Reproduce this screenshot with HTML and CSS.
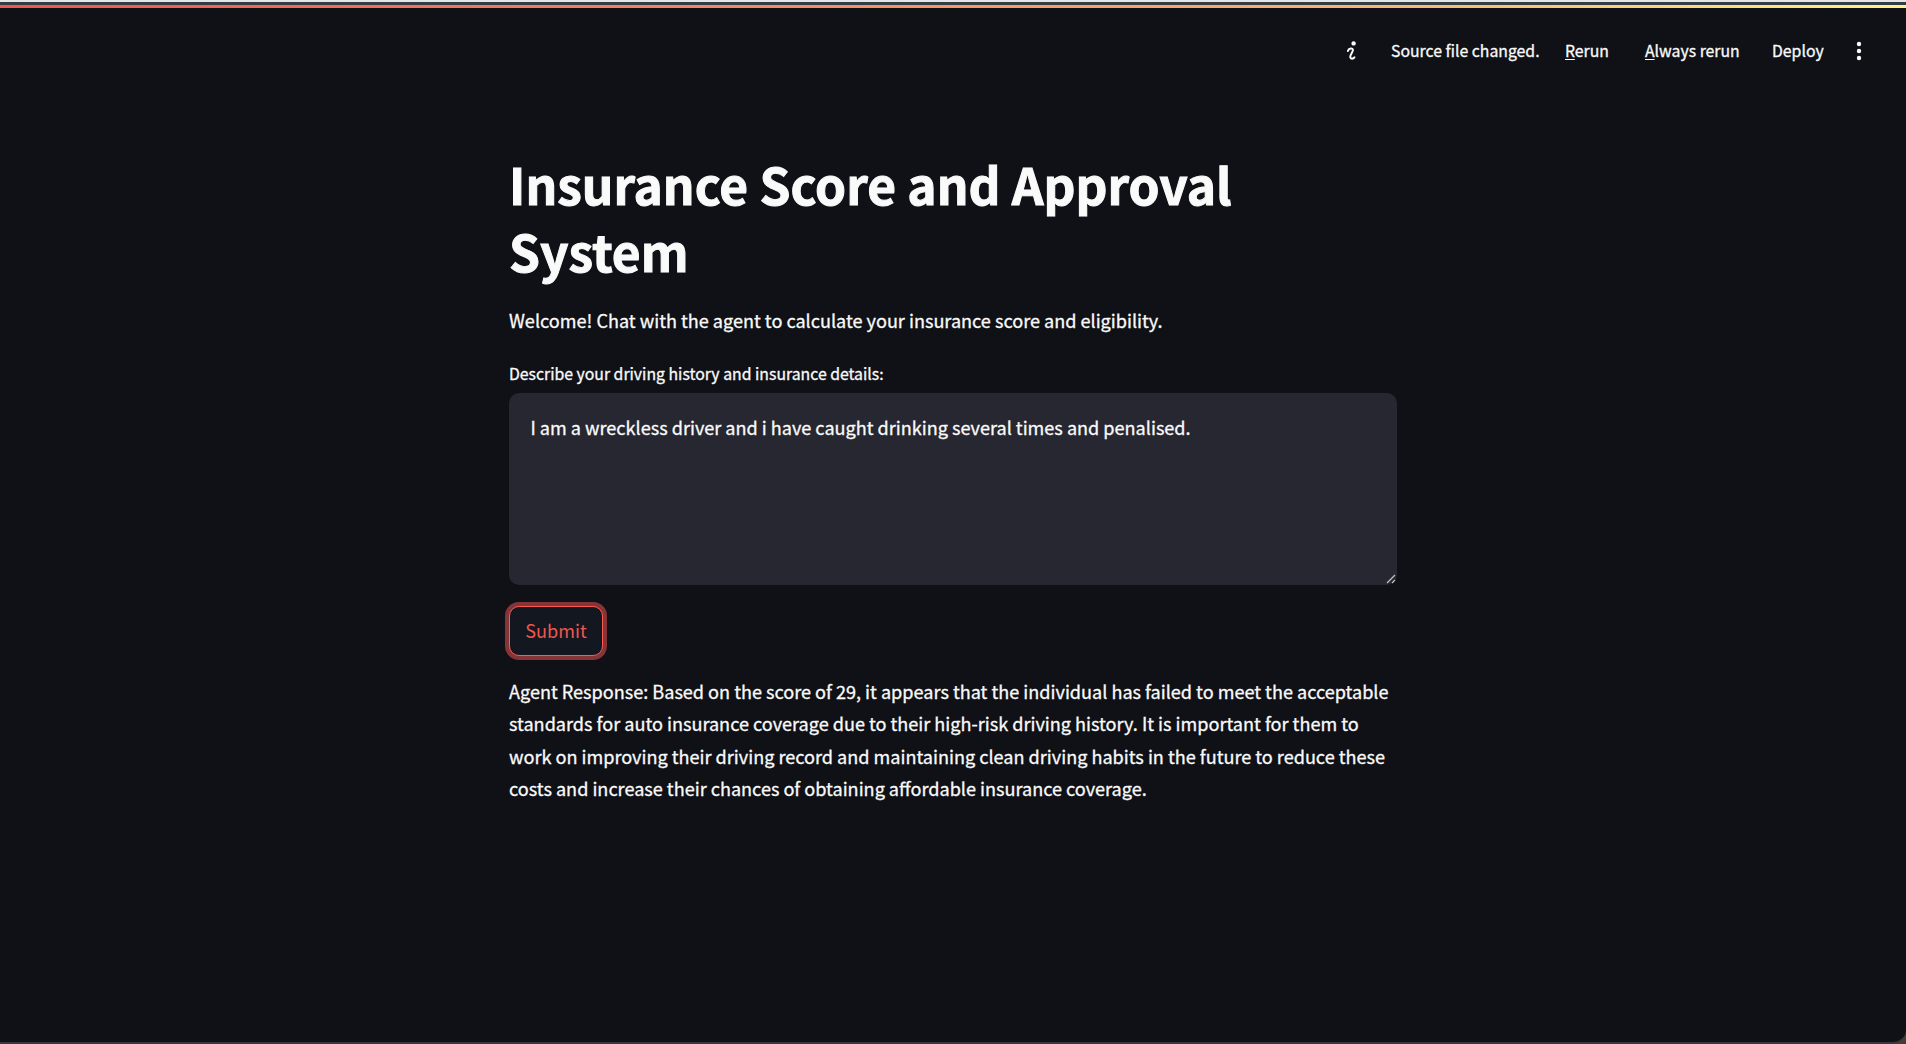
FILE: index.html
```
<!DOCTYPE html>
<html lang="en">
<head>
<meta charset="utf-8">
<title>Insurance Score and Approval System</title>
<link rel="stylesheet" href="styles.css">
</head>
<body>
<div class="app">
  <div class="decoration"></div>
  <header class="toolbar">
    <svg class="info-icon" viewBox="0 0 12 22" aria-hidden="true">
      <circle cx="7.6" cy="3.4" r="2.2" fill="#fafafa"/>
      <path d="M1.9 11 C2.6 8.4 7.2 7.4 6.9 10.2 C6.6 12.6 4 14.8 4.2 17 C4.5 19.4 7.4 18.9 8.4 17.4" fill="none" stroke="#fafafa" stroke-width="2" stroke-linecap="round"/>
    </svg>
    <span class="status">Source file changed.</span>
    <span class="action rerun"><u>R</u>erun</span>
    <span class="action always"><u>A</u>lways rerun</span>
    <span class="action deploy">Deploy</span>
    <svg class="menu-icon" viewBox="0 0 6 20" aria-hidden="true">
      <circle cx="3" cy="3" r="2.2"/><circle cx="3" cy="10" r="2.2"/><circle cx="3" cy="17" r="2.2"/>
    </svg>
  </header>
  <main class="content">
    <h1 class="title">Insurance Score and Approval System</h1>
    <p class="intro">Welcome! Chat with the agent to calculate your insurance score and eligibility.</p>
    <div class="label">Describe your driving history and insurance details:</div>
    <div class="textarea">I am a wreckless driver and i have caught drinking several times and penalised.
      <svg class="grip" viewBox="0 0 10 10" aria-hidden="true"><path d="M1 9 L9 1 M6 9 L9 6" stroke="#c4c4c6" stroke-width="1.2"/></svg>
    </div>
    <button class="submit">Submit</button>
    <p class="response">Agent Response: Based on the score of 29, it appears that the individual has failed to meet the acceptable standards for auto insurance coverage due to their high-risk driving history. It is important for them to work on improving their driving record and maintaining clean driving habits in the future to reduce these costs and increase their chances of obtaining affordable insurance coverage.</p>
  </main>
</div>
</body>
</html>
```
FILE: styles.css
```
* { box-sizing: border-box; }
html { background: #4a3a30; }
body {
  margin: 0;
  height: 1044px;
  overflow: hidden;
  font-family: "Noto Sans CJK SC", "Noto Sans", sans-serif;
  font-size: 18.08px;
  line-height: 32.4px;
  color: #fafafa;
  -webkit-text-stroke: 0.3px currentColor;
}
.app {
  height: 1044px;
  background: #0f1116;
  border-top: 2px solid #e4e5e7;
  border-bottom: 2px solid #3a363b;
  border-radius: 0 0 14px 0;
}
.decoration {
  height: 6px;
  border-top: 3px solid #343c44;
  background: linear-gradient(90deg, #f0564f, #f8b978 75%, #fdf488);
}
.toolbar {
  display: flex;
  align-items: center;
  height: 86px;
  padding-left: 1346px;
  font-size: 15.8px;
  line-height: 24px;
  white-space: nowrap;
}
.info-icon { width: 12px; height: 22px; margin-right: 33px; }
.status { width: 174px; }
.rerun { width: 80px; }
.always { width: 127px; }
.deploy { width: 84px; }
.menu-icon { width: 6px; height: 20px; fill: #fafafa; }
.action u { text-decoration-thickness: 1px; text-underline-offset: 2px; }
.content {
  display: flex;
  flex-direction: column;
  align-items: flex-start;
  width: 888px;
  margin: 56px 0 0 509px;
}
.title {
  margin: 0 0 21px;
  font-size: 49.65px;
  line-height: 66.6px;
  font-weight: 700;
  -webkit-text-stroke-width: 1px;
}
.intro { margin: 0 0 25px; }
.label { font-size: 15.8px; line-height: 24px; margin-bottom: 7px; }
.textarea {
  position: relative;
  width: 888px;
  height: 192px;
  padding: 18px 21.5px;
  border-radius: 10px;
  background: #262730;
}
.grip { position: absolute; right: 1px; bottom: 1px; width: 10px; height: 10px; }
.submit {
  width: 94px;
  height: 50px;
  margin: 21px 0 19.4px;
  padding: 0;
  border: 1px solid #ff5a52;
  border-radius: 10px;
  background: #131720;
  box-shadow: 0 0 0 4px #853437;
  color: #f0564f;
  font: inherit;
  -webkit-text-stroke: 0;
}
.response { margin: 0; width: 888px; }
```
